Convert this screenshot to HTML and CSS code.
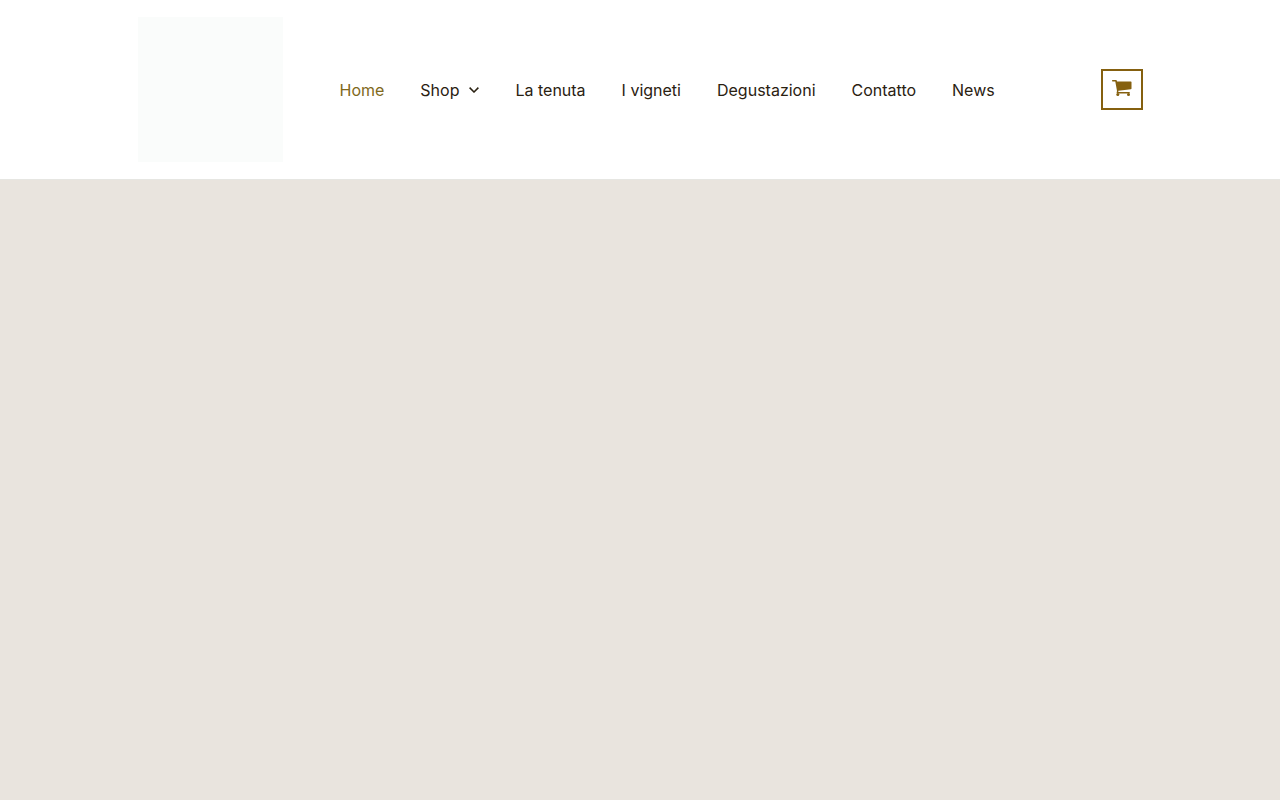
FILE: index.html
```html
<!DOCTYPE html>
<html lang="it">
<head>
<meta charset="utf-8">
<meta name="viewport" content="width=device-width, initial-scale=1">
<title>Home</title>
<link rel="stylesheet" href="styles.css">
</head>
<body>
<header class="site-header">
  <div class="header-inner">
    <a class="logo" href="#" aria-label="Home page"></a>
    <nav class="main-nav">
      <a class="nav-link active" href="#">Home</a>
      <a class="nav-link" href="#">Shop
        <svg class="chevron" viewBox="0 0 10 6" aria-hidden="true"><path d="M.6 .6 5 5 9.4 .6"/></svg>
      </a>
      <a class="nav-link" href="#">La tenuta</a>
      <a class="nav-link" href="#">I vigneti</a>
      <a class="nav-link" href="#">Degustazioni</a>
      <a class="nav-link" href="#">Contatto</a>
      <a class="nav-link" href="#">News</a>
    </nav>
    <a class="cart" href="#" aria-label="Carrello">
      <svg class="cart-icon" viewBox="0 0 20 17" aria-hidden="true"><path d="M.6 0H4Q4.6 0 4.8.6L5 1.4H18.8Q19.5 1.4 19.5 2.1V8.4Q19.5 9.1 18.8 9.2L6.3 10.7 6.4 12H17.2Q17.9 12 17.9 12.7T17.2 13.4H5.2Q4.6 13.4 4.6 12.8L5 10.9 3.3 1.5H.6Q0 1.5 0 .75T.6 0Z"/><circle cx="5.8" cy="14.6" r="1.5"/><circle cx="16.5" cy="14.6" r="1.5"/></svg>
    </a>
  </div>
</header>
<main class="hero"></main>
</body>
</html>
```
FILE: styles.css
```css
* { box-sizing: border-box; }

body {
  margin: 0;
  min-height: 100vh;
  display: flex;
  flex-direction: column;
  background: #fff;
  font-family: Inter, "Liberation Sans", sans-serif;
  font-size: 16px;
  line-height: 24px;
}

.site-header {
  border-bottom: 1px solid #e6e6e2;
}

.header-inner {
  display: flex;
  align-items: center;
  max-width: 1045px;
  margin: 0 auto;
  padding: 17px 20px;
}

.logo {
  width: 145px;
  aspect-ratio: 1;
  background: #fafcfb;
}

.main-nav {
  display: flex;
  gap: 36px;
  margin-left: 57px;
}

.nav-link {
  display: flex;
  align-items: center;
  gap: 10px;
  color: #2a2111;
  text-decoration: none;
  white-space: nowrap;
}

.nav-link.active { color: #80691b; }

.chevron {
  width: 10px;
  height: 6px;
  fill: none;
  stroke: currentColor;
  stroke-width: 1.5;
}

.cart {
  display: flex;
  justify-content: center;
  width: 42px;
  height: 41px;
  margin-left: auto;
  padding-top: 9px;
  border: 2px solid #85600f;
}

.cart-icon {
  width: 20px;
  height: 17px;
  fill: #85600f;
}

.hero {
  flex: 1;
  background: #e9e4de;
}
```
